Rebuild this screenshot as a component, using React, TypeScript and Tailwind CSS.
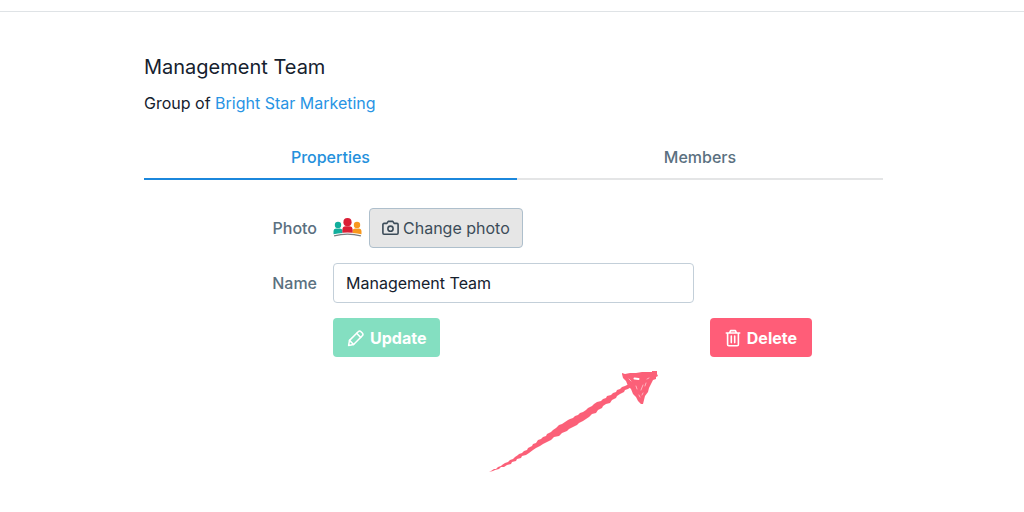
import { useState } from "react";

function CameraIcon() {
  return (
    <svg
      width="17"
      height="16"
      viewBox="0 0 17 16"
      fill="none"
      stroke="currentColor"
      strokeWidth="1.6"
      strokeLinejoin="round"
      aria-hidden="true"
    >
      <path d="M2 3.4h2.9l1.3-2h4.6l1.3 2H15a1.1 1.1 0 0 1 1.1 1.1v8.6a1.1 1.1 0 0 1-1.1 1.1H2a1.1 1.1 0 0 1-1.1-1.1V4.5A1.1 1.1 0 0 1 2 3.4z" />
      <circle cx="8.5" cy="8.7" r="2.6" />
    </svg>
  );
}

function PencilIcon() {
  return (
    <svg
      width="18"
      height="18"
      viewBox="0 0 18 18"
      fill="none"
      stroke="currentColor"
      strokeWidth="1.5"
      strokeLinejoin="round"
      strokeLinecap="round"
      aria-hidden="true"
    >
      <path d="M1.600 16.400l.9-5L11.200 2.700a2 2 0 0 1 2.800 0l1.300 1.300a2 2 0 0 1 0 2.800L6.600 15.500z" />
      <path d="M9.600 4.300l4.100 4.100M2.500 11.400l4.100 4.100" />
    </svg>
  );
}

function TrashIcon() {
  return (
    <svg
      width="16"
      height="18"
      viewBox="0 0 16 18"
      fill="none"
      stroke="currentColor"
      strokeWidth="1.6"
      strokeLinejoin="round"
      strokeLinecap="round"
      aria-hidden="true"
    >
      <path d="M1.3 4h13.4M2.6 4v11.4a1.3 1.3 0 0 0 1.3 1.3h8.2a1.3 1.3 0 0 0 1.3-1.3V4M4.6 3.8l1-2.2h4.8l1 2.2" />
      <path d="M6.3 7v6.6M9.7 7v6.6" />
    </svg>
  );
}

function TeamPhoto() {
  return (
    <svg width="29" height="20" viewBox="0 0 28 20" role="img" aria-label="Team">
      <circle cx="4.5" cy="6.9" r="3.2" fill="#12ae9c" />
      <path d="M0 16.2v-2.800a3 3 0 0 1 3-3h3.400a3 3 0 0 1 2.600 1.500v3q-4.600.2-9 1.300z" fill="#12ae9c" />
      <circle cx="23.5" cy="6.9" r="3.2" fill="#f8981d" />
      <path d="M28 16.200v-2.800a3 3 0 0 0-3-3h-3.400a3 3 0 0 0-2.600 1.500v3q4.600.2 9 1.300z" fill="#f8981d" />
      <circle cx="14" cy="4.200" r="4.100" fill="#da1f36" />
      <path d="M8.900 14.800v-3.200a3.400 3.400 0 0 1 3.400-3.400h3.400a3.400 3.400 0 0 1 3.400 3.400v3.200q-5.100-.5-10.200 0z" fill="#da1f36" />
      <path d="M.6 17.800q13.400-3.400 26.800 0" fill="none" stroke="#777b7e" strokeWidth="1.300" />
    </svg>
  );
}

function CrayonArrow() {
  return (
    <svg
      className="text-[#fb6078]"
      width="170"
      height="102"
      viewBox="7 6 170 102"
      fill="currentColor"
      aria-hidden="true"
    >
      <path d="M9 106l3-2 2 0 2-2 3-1 1-1 3-2 3-1 2-2 3-1 2-2 3-2 1-1 3-1 2-2 3-1 1-2 4-2 1-2 3-1 2-3 3-1 2-2 3-1 1-2 4-2 2-2 3-2 3-3 3-1 3-2 3-2 2-1 3-1 2-2 3-1 2-2 3-1 3-2 2-2 4-2 2-2 3-2 4-1 2-2 3-1 1-2 4-1 2-2 3-1 1-2 3-1 2-2 3-1 2-1 3-1 1 3-3 2-3 1-1 2-4 2-3 2-1 2-4 2-2 3-4 1-3 2-1 2-4 2-2 3-4 1-3 3-3 2-3 2-4 2-2 2-4 2-4 2-2 2-5 2-3 3-5 1-3 3-4 2-4 2-3 2-4 2-3 2-4 3-3 2-4 1-1 2-4 1-1 2-4 1-1 2-4 1-3 2-3 0-2 2-4 1-2 1-4 1-2 2-3 1-2 0-2 1z" />
      <path d="M140 8l3 1 5-1 6 0 6-1 6 0 4 0 0-1 5 0 0 3 1 2-2 1 0 2-3 1-2 4-2 4-1 4-3 4-1 4-1 4-2 0-3-3-2-4-3-3-2-5-3-3-2-5-3-3-1-4z" />
      {/* paper showing through the crayon */}
      <g fill="none" stroke="#fff" strokeLinecap="round">
        <path d="M152.5 13.5l4 .5" strokeWidth="2" />
        <path
          d="M147 14l2 2M161 20l-2 5M164 18l-1 3M154 21l1 3M161 28l-1 2M157 30l1 2M165 14l2-1"
          strokeWidth=".8"
          opacity=".65"
        />
      </g>
    </svg>
  );
}

const tabs = ["Properties", "Members"];

export default function App() {
  const [activeTab, setActiveTab] = useState("Properties");
  const [name, setName] = useState("Management Team");

  return (
    <div className="min-h-screen bg-white font-['Inter',sans-serif] text-base text-[#15212e]">
      <header className="h-3 border-b border-[#dfe3e6]" />

      <main className="pt-[41px] pr-[141px] pl-36">
        <h1 className="text-xl leading-7">Management Team</h1>
        <p className="mt-2.5">
          Group of{" "}
          <a href="#" className="text-[#2894e4]">
            Bright Star Marketing
          </a>
        </p>

        <div role="tablist" className="mt-[29px] flex font-medium">
          {tabs.map((tab) => (
            <button
              key={tab}
              type="button"
              role="tab"
              aria-selected={activeTab === tab}
              onClick={() => setActiveTab(tab)}
              className={[
                "h-9 grow cursor-pointer border-b-2 pb-2",
                activeTab === tab
                  ? "border-[#1b87dc] text-[#2490dc]"
                  : "border-[#e4e5e6] text-[#5a7080]",
              ].join(" ")}
            >
              {tab}
            </button>
          ))}
        </div>

        <form
          className="mt-7 grid grid-cols-[100px_minmax(0,1fr)_auto] items-center gap-x-4 gap-y-[15px] pr-[71px] pl-[73px]"
          onSubmit={(e) => e.preventDefault()}
        >
          <span className="text-right font-medium text-[#5a7080]">Photo</span>
          <div className="col-span-2 flex items-center gap-[7px]">
            <TeamPhoto />
            <button
              type="button"
              className="flex h-10 items-center gap-1 rounded border border-[#aebfcc] bg-[#e6e6e6] px-3 text-[#3c4c59]"
            >
              <CameraIcon />
              Change photo
            </button>
          </div>

          <label htmlFor="name" className="text-right font-medium text-[#5a7080]">
            Name
          </label>
          <input
            id="name"
            name="name"
            value={name}
            onChange={(e) => setName(e.target.value)}
            className="col-start-2 h-10 w-full rounded border border-[#c3cfd9] px-3 outline-none focus:border-[#2490dc]"
          />

          <button
            type="submit"
            className="col-start-2 flex h-[39px] items-center gap-[5px] justify-self-start rounded bg-[#84dfc1] px-3.5 font-bold text-white"
          >
            <PencilIcon />
            Update
          </button>
          <button
            type="button"
            className="flex h-[39px] items-center gap-1.5 rounded bg-[#ff5d78] px-[15px] font-bold text-white"
          >
            <TrashIcon />
            Delete
          </button>
        </form>

        <div className="mt-3.5 pl-[345px]">
          <CrayonArrow />
        </div>
      </main>
    </div>
  );
}
